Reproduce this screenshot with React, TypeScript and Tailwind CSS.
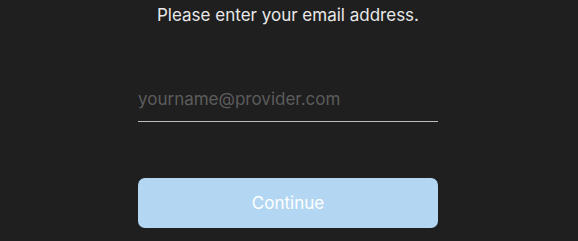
import React from 'react';

const App: React.FC = () => {
  return (
    <div className="min-h-screen w-full bg-[#1f1f1f] flex flex-col items-center font-['Inter',sans-serif]">
      <p className="mt-[5px] pr-[2px] text-[17px] leading-[20px] text-[#e8e8e8]">Please enter your email address.</p>
      <div className="mt-[62px] w-[300px] -translate-x-[1px] border-b border-[#bdbdbd]">
        <input
          type="email"
          placeholder="yourname@provider.com"
          className="w-full bg-transparent pb-[12px] text-[17px] leading-[20px] text-[#e8e8e8] placeholder:text-[#5c5c5c] outline-none"
        />
      </div>
      <button className="mt-[56px] h-[50px] w-[300px] -translate-x-[1px] rounded-[7px] bg-[#b3d7f3] pt-[2px] text-[17px] text-white">
        Continue
      </button>
    </div>
  );
};

export default App;
